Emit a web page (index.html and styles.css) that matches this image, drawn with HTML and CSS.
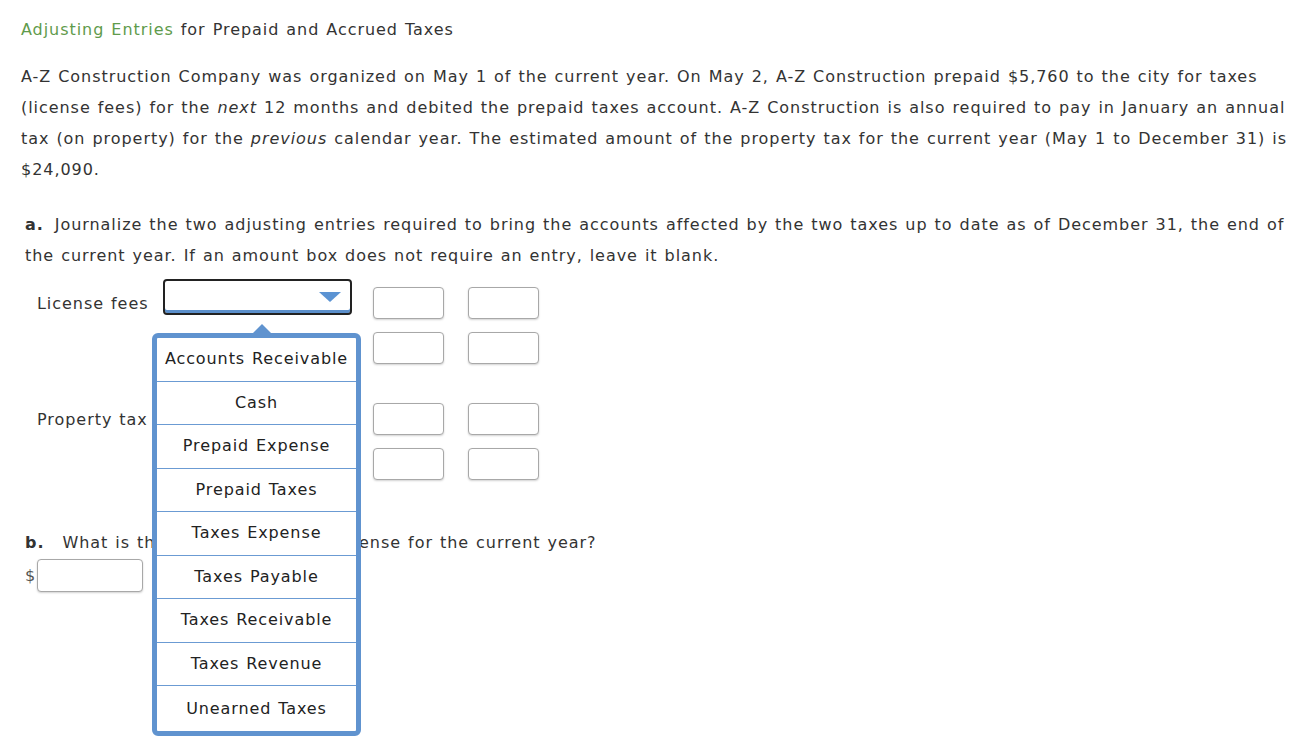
FILE: index.html
```html
<!DOCTYPE html>
<html lang="en">
<head>
  <meta charset="UTF-8">
  <meta name="viewport" content="width=device-width, initial-scale=1.0">
  <title>Adjusting Entries for Prepaid and Accrued Taxes</title>
  <link rel="stylesheet" href="styles.css">
</head>
<body>
  <div class="problem">
    <h1 class="title"><span class="topic">Adjusting Entries</span> for Prepaid and Accrued Taxes</h1>

    <p class="intro">A-Z Construction Company was organized on May 1 of the current year. On May 2, A-Z Construction prepaid $5,760 to the city for taxes (license fees) for the <em>next</em> 12 months and debited the prepaid taxes account. A-Z Construction is also required to pay in January an annual tax (on property) for the <em>previous</em> calendar year. The estimated amount of the property tax for the current year (May 1 to December 31) is $24,090.</p>

    <div class="part">
      <p class="question"><b class="mark">a.</b>Journalize the two adjusting entries required to bring the accounts affected by the two taxes up to date as of December 31, the end of the current year. If an amount box does not require an entry, leave it blank.</p>

      <div class="entry entry-first">
        <div class="entry-label">License fees</div>
        <div class="account-cell">
          <div class="select open"><span class="caret"></span></div>
          <ul class="options">
            <li>Accounts Receivable</li>
            <li>Cash</li>
            <li>Prepaid Expense</li>
            <li>Prepaid Taxes</li>
            <li>Taxes Expense</li>
            <li>Taxes Payable</li>
            <li>Taxes Receivable</li>
            <li>Taxes Revenue</li>
            <li>Unearned Taxes</li>
          </ul>
        </div>
        <div class="amounts">
          <div class="amount-row"><input class="amount" type="text"><input class="amount" type="text"></div>
          <div class="amount-row"><input class="amount" type="text"><input class="amount" type="text"></div>
        </div>
      </div>

      <div class="entry">
        <div class="entry-label">Property tax</div>
        <div class="account-cell">
          <div class="select"><span class="caret"></span></div>
        </div>
        <div class="amounts">
          <div class="amount-row"><input class="amount" type="text"><input class="amount" type="text"></div>
          <div class="amount-row"><input class="amount" type="text"><input class="amount" type="text"></div>
        </div>
      </div>
    </div>

    <div class="part part-b">
      <p class="question"><b class="mark mark-b">b.</b>What is the amount of taxes expense for the current year?</p>
      <div class="answer"><span class="dollar">$</span><input class="amount wide" type="text"></div>
    </div>
  </div>
</body>
</html>
```

FILE: styles.css
```css
body {
  margin: 0;
  min-height: 747px;
  font-family: "DejaVu Sans", Verdana, sans-serif;
  font-size: 16px;
  letter-spacing: 0.95px;
  word-spacing: 1px;
  color: #333;
  background: #fff;
}
.problem {
  padding: 14px 0 0 21px;
  line-height: 31px;
}
.title {
  margin: 0;
  font-size: 16px;
  font-weight: normal;
}
.topic {
  color: #5f9b4c;
}
.intro {
  margin: 16px 0 0;
}
.part {
  margin-top: 24px;
  padding-left: 4px;
}
.question {
  margin: 0;
}
.mark {
  margin-right: 11px;
}
.mark-b {
  margin-right: 18px;
}

/* journal entries */
.entry {
  display: flex;
  align-items: flex-start;
  margin-top: 31px;
  padding-left: 12px;
}
.entry-first {
  margin-top: 8px;
}
.entry-label {
  flex: 0 0 126px;
  margin-top: 9px;
  white-space: nowrap;
}
.account-cell {
  position: relative;
  flex: 0 0 189px;
}
.select {
  box-sizing: border-box;
  height: 36px;
  border: 2px solid #222;
  border-radius: 4px;
  box-shadow: inset 0 -3px 0 #5b8fcb;
  position: relative;
}
.caret {
  position: absolute;
  right: 9px;
  top: 11px;
  border-left: 11px solid transparent;
  border-right: 11px solid transparent;
  border-top: 10px solid #5b93d3;
}
.amounts {
  display: flex;
  flex-direction: column;
  gap: 13px;
  margin: 8px 0 0 21px;
}
.amount-row {
  display: flex;
  gap: 24px;
}
.amount {
  box-sizing: border-box;
  width: 71px;
  height: 32px;
  margin: 0;
  border: 1px solid #a8a8a8;
  border-radius: 4px;
  box-shadow: 0 1px 2px rgba(0,0,0,0.18);
  background: #fff;
  font: inherit;
}

/* open account list */
.options {
  position: absolute;
  left: -11px;
  top: 54px;
  width: 209px;
  box-sizing: border-box;
  margin: 0;
  padding: 0;
  list-style: none;
  background: #fff;
  border: 5px solid #6093cf;
  border-radius: 6px;
  z-index: 2;
  color: #222;
  line-height: 20px;
  letter-spacing: 0.9px;
}
.options::before {
  content: "";
  position: absolute;
  left: 96px;
  top: -14px;
  border-left: 9px solid transparent;
  border-right: 9px solid transparent;
  border-bottom: 9px solid #6093cf;
}
.options li {
  height: 43.5px;
  box-sizing: border-box;
  display: flex;
  align-items: center;
  justify-content: center;
  border-bottom: 1px solid #6b9bd3;
  white-space: nowrap;
}
.options li:last-child {
  border-bottom: none;
  height: 45px;
}

/* part b */
.part-b {
  margin-top: 47px;
}
.answer {
  display: flex;
  align-items: center;
  margin-top: 1px;
}
.dollar {
  color: #555;
  width: 12px;
}
.amount.wide {
  width: 106px;
  height: 33px;
}
```
